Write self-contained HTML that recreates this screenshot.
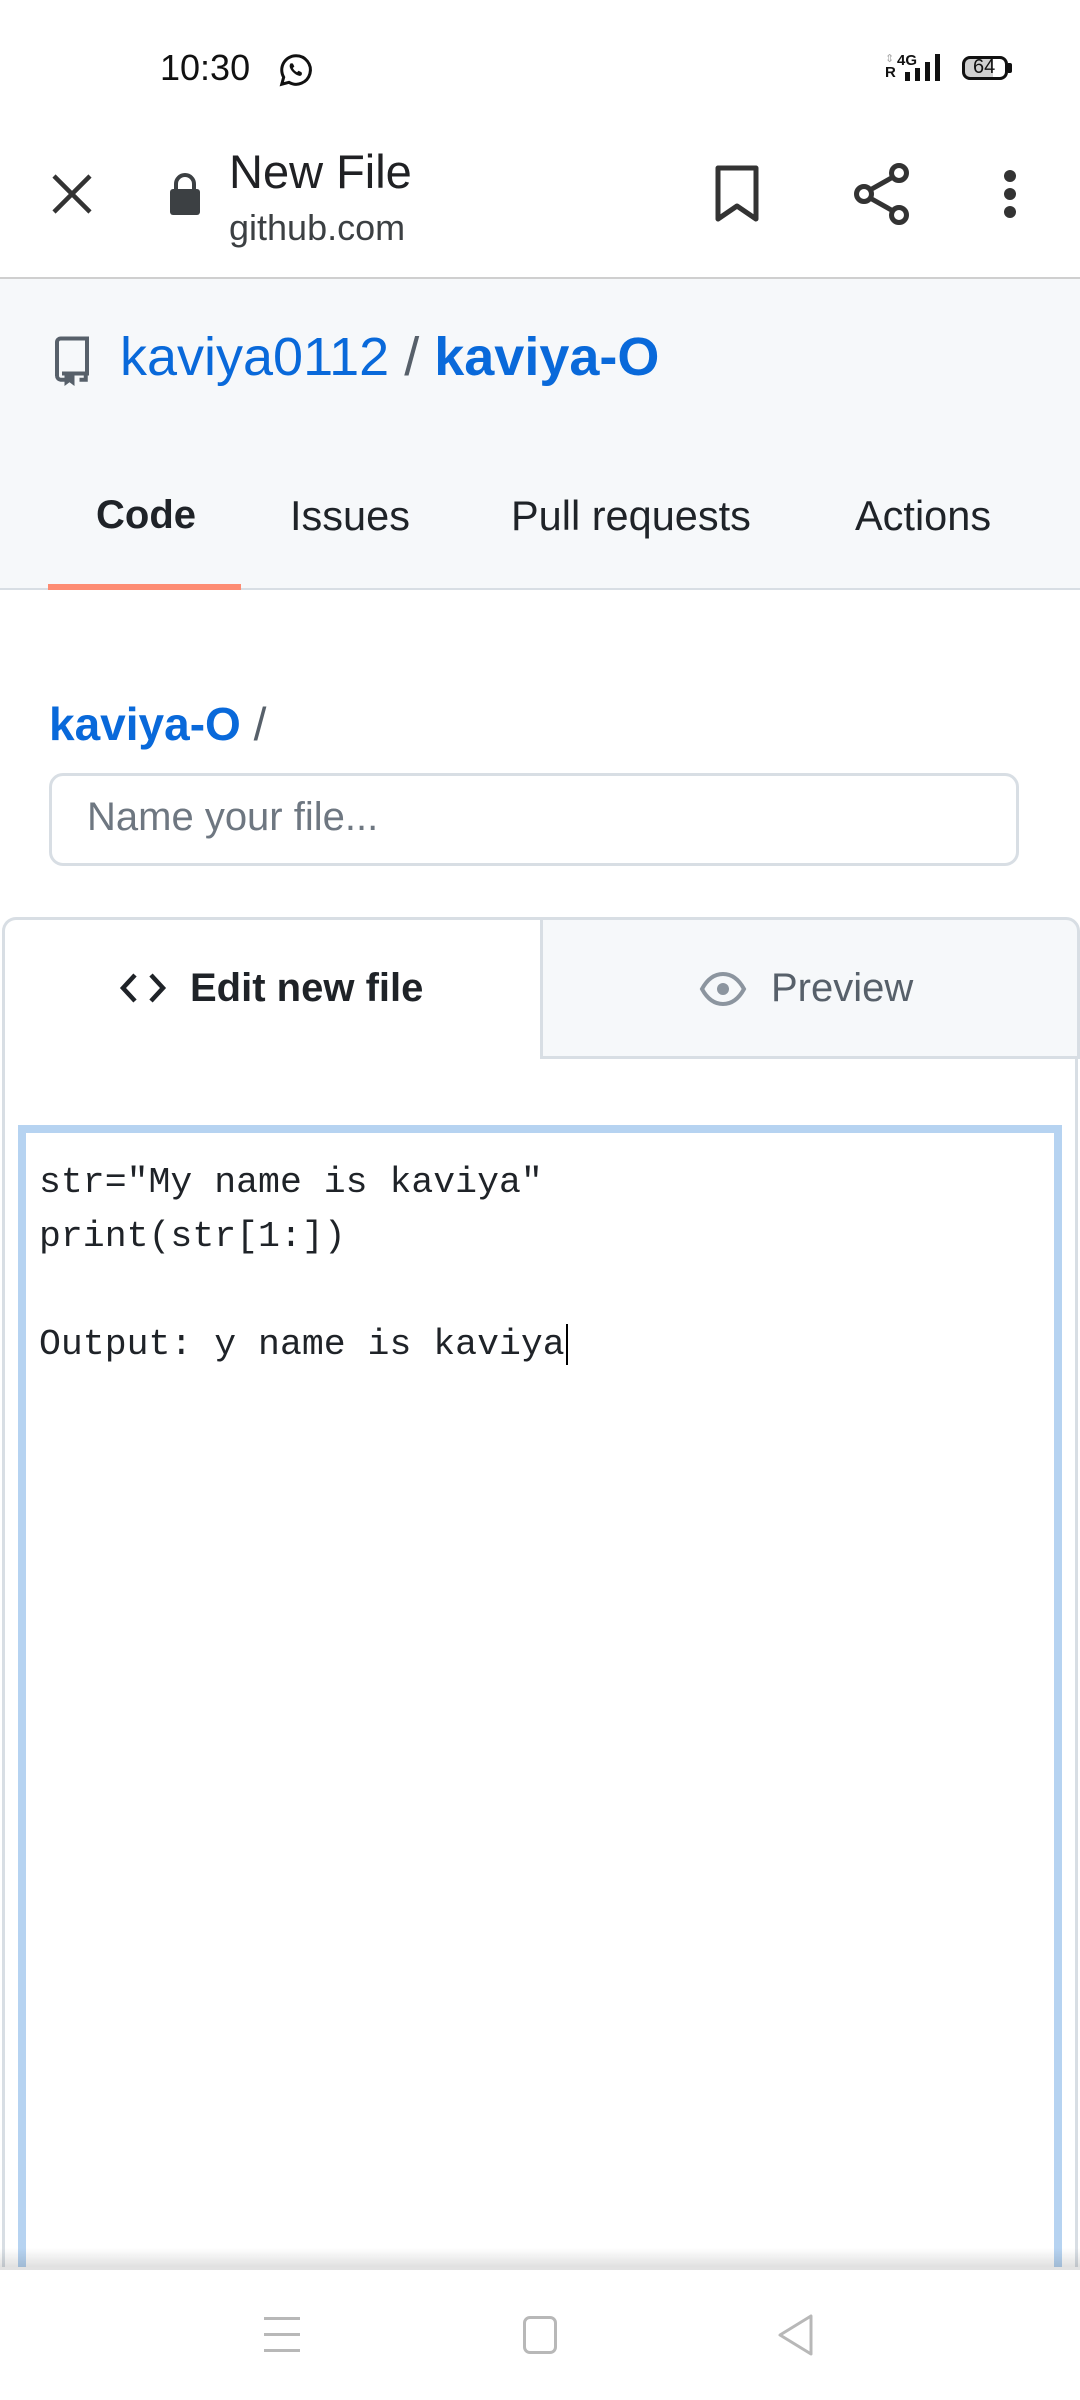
<!DOCTYPE html>
<html><head><meta charset="utf-8"><style>
*{margin:0;padding:0;box-sizing:border-box}
body{width:1080px;height:2400px;position:relative;background:#fff;font-family:"Liberation Sans",sans-serif;overflow:hidden;color:#1f2328}
.a{position:absolute;white-space:nowrap}
</style></head><body>
<!-- status bar -->
<div class="a" style="left:160px;top:47px;font-size:36px;color:#111;">10:30</div>
<svg class="a" style="left:278px;top:52px" width="36" height="36" viewBox="0 0 24 24"><path d="M12 2.5a9.5 9.5 0 0 0-8.2 14.3L2.5 21.5l4.8-1.3A9.5 9.5 0 1 0 12 2.5z" fill="none" stroke="#111" stroke-width="2"/><path d="M8.5 7.5c-.5.5-1 1.5-.5 3s2.5 4 5 5 2.5 0 3-.8l-.3-1.2-2-1-1 1c-1-.4-2.4-1.8-2.8-2.8l1-1-1-2z" fill="#111"/></svg>
<div class="a" style="left:885px;top:55px;font-size:11px;color:#aaa;line-height:8px">⇕</div>
<div class="a" style="left:885px;top:64px;font-size:15px;font-weight:bold;color:#111">R</div>
<div class="a" style="left:897px;top:52px;font-size:15px;font-weight:bold;color:#111">4G</div>
<div class="a" style="left:905px;top:72px;width:5px;height:9px;background:#111"></div>
<div class="a" style="left:915px;top:68px;width:5px;height:13px;background:#111"></div>
<div class="a" style="left:925px;top:62px;width:5px;height:19px;background:#111"></div>
<div class="a" style="left:935px;top:54px;width:5px;height:27px;background:#111"></div>
<div class="a" style="left:962px;top:56px;width:46px;height:24px;border:3px solid #111;border-radius:8px;background:linear-gradient(90deg,#d0d0d0 70%,#fff 70%)"></div>
<div class="a" style="left:1008px;top:63px;width:4px;height:10px;background:#111;border-radius:0 2px 2px 0"></div>
<div class="a" style="left:973px;top:56px;font-size:20px;color:#111">64</div>

<!-- toolbar -->
<svg class="a" style="left:50px;top:172px" width="44" height="44" viewBox="0 0 44 44"><path d="M4 4L40 40M40 4L4 40" stroke="#333" stroke-width="4.5"/></svg>
<svg class="a" style="left:168px;top:171px" width="34" height="46" viewBox="0 0 34 46"><rect x="2" y="18" width="30" height="26" rx="3" fill="#3c4043"/><path d="M8 19v-6a9 9 0 0 1 18 0v6" fill="none" stroke="#3c4043" stroke-width="4"/></svg>
<div class="a" style="left:229px;top:144px;font-size:47px;color:#202124">New File</div>
<div class="a" style="left:229px;top:207px;font-size:36px;color:#3c4043">github.com</div>
<svg class="a" style="left:714px;top:164px" width="46" height="60" viewBox="0 0 46 60"><path d="M4 4h38v51L23 42 4 55z" fill="none" stroke="#333" stroke-width="5" stroke-linejoin="round"/></svg>
<svg class="a" style="left:852px;top:162px" width="60" height="64" viewBox="0 0 60 64"><circle cx="47" cy="11" r="7.5" fill="none" stroke="#333" stroke-width="5"/><circle cx="12" cy="32" r="7.5" fill="none" stroke="#333" stroke-width="5"/><circle cx="47" cy="53" r="7.5" fill="none" stroke="#333" stroke-width="5"/><path d="M18 28l23-13M18 36l23 13" stroke="#333" stroke-width="5"/></svg>
<div class="a" style="left:1004px;top:170px;width:12px;height:12px;border-radius:6px;background:#333"></div>
<div class="a" style="left:1004px;top:188px;width:12px;height:12px;border-radius:6px;background:#333"></div>
<div class="a" style="left:1004px;top:206px;width:12px;height:12px;border-radius:6px;background:#333"></div>
<div class="a" style="left:0;top:277px;width:1080px;height:2px;background:#cfcfcf"></div>

<!-- gray header -->
<div class="a" style="left:0;top:279px;width:1080px;height:311px;background:#f6f8fa;border-bottom:2px solid #d8dee4"></div>
<svg class="a" style="left:52px;top:336px" width="40" height="50" viewBox="0 0 16 20"><path d="M2 16V2.5A1.5 1.5 0 0 1 3.5 1H14v14H4M2 16a1.6 1.6 0 0 0 1.5 1.5H5M11 17.5h2.5V15" fill="none" stroke="#57606a" stroke-width="1.6"/><path d="M5 15h4v5l-2-1.5L5 20z" fill="#57606a"/></svg>
<div class="a" style="left:120px;top:326px;font-size:54px;color:#0969da">kaviya0112 <span style="color:#57606a">/</span> <b>kaviya-O</b></div>
<div class="a" style="left:96px;top:493px;font-size:40px;font-weight:bold;color:#1f2328">Code</div>
<div class="a" style="left:290px;top:492px;font-size:41.5px;color:#1f2328">Issues</div>
<div class="a" style="left:511px;top:492px;font-size:41.5px;color:#1f2328">Pull requests</div>
<div class="a" style="left:855px;top:492px;font-size:41.5px;color:#1f2328">Actions</div>
<div class="a" style="left:48px;top:584px;width:193px;height:6px;background:#fd8c73"></div>

<!-- filename -->
<div class="a" style="left:49px;top:697px;font-size:46px;"><b style="color:#0969da">kaviya-O</b> <span style="color:#57606a">/</span></div>
<div class="a" style="left:49px;top:773px;width:970px;height:93px;border:3px solid #d8dee4;border-radius:14px;background:#fff"></div>
<div class="a" style="left:87px;top:795px;font-size:40px;color:#6e7781">Name your file...</div>

<!-- editor tabs -->
<div class="a" style="left:2px;top:917px;width:1076px;height:1380px;border:3px solid #d8dee4;border-radius:14px 14px 0 0;border-bottom:none"></div>
<div class="a" style="left:540px;top:917px;width:540px;height:142px;background:#f6f8fa;border:3px solid #d8dee4;border-top-right-radius:14px"></div>
<svg class="a" style="left:119px;top:971px" width="48" height="34" viewBox="0 0 48 34"><path d="M16 4L4 17l12 13M32 4l12 13-12 13" fill="none" stroke="#1f2328" stroke-width="4.5"/></svg>
<div class="a" style="left:190px;top:966px;font-size:40px;font-weight:bold;color:#1f2328">Edit new file</div>
<svg class="a" style="left:699px;top:970px" width="48" height="38" viewBox="0 0 48 38"><path d="M3 19C9 8 16 4 24 4s15 4 21 15c-6 11-13 15-21 15S9 30 3 19z" fill="none" stroke="#8c959f" stroke-width="4"/><circle cx="24" cy="19" r="6" fill="#8c959f"/></svg>
<div class="a" style="left:771px;top:966px;font-size:40px;color:#57606a">Preview</div>

<!-- editor -->
<div class="a" style="left:18px;top:1125px;width:1044px;height:1150px;border:8px solid #b6d3f1;border-bottom:none;background:#fff"></div>
<div class="a" style="left:39px;top:1156px;font-family:'Liberation Mono',monospace;font-size:36.5px;line-height:54px;color:#1f2328;white-space:pre">str="My name is kaviya"
print(str[1:])

Output: y name is kaviya<span style="border-left:2px solid #000;margin-left:1px"></span></div>
<div class="a" style="left:0;top:2248px;width:1080px;height:19px;background:linear-gradient(rgba(0,0,0,0),rgba(0,0,0,.12))"></div>
<!-- nav bar -->
<div class="a" style="left:0;top:2267px;width:1080px;height:133px;background:#fff;border-top:3px solid #e2e2e2"></div>
<div class="a" style="left:264px;top:2317px;width:36px;height:3px;background:#b8b8b8"></div>
<div class="a" style="left:264px;top:2333px;width:36px;height:3px;background:#b8b8b8"></div>
<div class="a" style="left:264px;top:2349px;width:36px;height:3px;background:#b8b8b8"></div>
<div class="a" style="left:523px;top:2316px;width:34px;height:38px;border:3px solid #b8b8b8;border-radius:7px"></div>
<svg class="a" style="left:775px;top:2313px" width="40" height="44" viewBox="0 0 40 44"><path d="M36 3v38L5 22z" fill="none" stroke="#b8b8b8" stroke-width="3" stroke-linejoin="round"/></svg>
</body></html>
